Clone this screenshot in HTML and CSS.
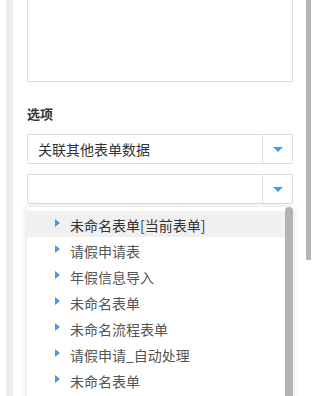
FILE: index.html
```html
<!DOCTYPE html>
<html lang="zh-CN">
<head>
  <meta charset="UTF-8">
  <meta name="viewport" content="width=device-width, initial-scale=1.0">
  <title>表单设置</title>
  <link rel="stylesheet" href="styles.css">
</head>
<body>

  <div class="page">
    <div class="side"></div>

    <main class="panel">
      <div class="textarea"></div>

      <div class="label">选项</div>

      <div class="select">
        <span class="select-text">关联其他表单数据</span>
        <span class="select-btn"><i class="arrow"></i></span>
      </div>

      <div class="select">
        <span class="select-text"></span>
        <span class="select-btn"><i class="arrow"></i></span>
      </div>

      <div class="dropdown">
        <ul class="list">
          <li class="item active"><i class="tri"></i>未命名表单[当前表单]</li>
          <li class="item"><i class="tri"></i>请假申请表</li>
          <li class="item"><i class="tri"></i>年假信息导入</li>
          <li class="item"><i class="tri"></i>未命名表单</li>
          <li class="item"><i class="tri"></i>未命名流程表单</li>
          <li class="item"><i class="tri"></i>请假申请_自动处理</li>
          <li class="item"><i class="tri"></i>未命名表单</li>
        </ul>
        <div class="list-scroll"></div>
      </div>
    </main>

    <div class="page-scroll"></div>
  </div>

</body>
</html>
```

FILE: styles.css
```css
body {
  margin: 0;
  background: #fff;
  font-family: "Noto Sans CJK SC", "Liberation Sans", sans-serif;
  font-size: 14px;
  color: #333;
  overflow: hidden;
}

.page {
  display: flex;
  height: 396px;
  overflow: hidden;
}

.side {
  width: 7px;
  margin-left: 6px;
  background: #ededed;
  flex-shrink: 0;
}

.panel {
  width: 266px;
  margin-left: 14px;
}

.textarea {
  height: 84px;
  margin-top: -2px;
  border: 1px solid #ddd;
  box-sizing: border-box;
  border-radius: 2px;
}

.label {
  margin-top: 24px;
  height: 16px;
  line-height: 16px;
  font-size: 13px;
  font-weight: bold;
  color: #333;
}

.select {
  display: flex;
  height: 30px;
  margin-top: 12px;
  border: 1px solid #ddd;
  box-sizing: border-box;
  border-radius: 2px;
  background: #fff;
}

.select + .select {
  margin-top: 10px;
}

.select-text {
  flex: 1;
  padding-left: 10px;
  line-height: 28px;
  color: #333;
}

.select-btn {
  width: 29px;
  border-left: 1px solid #ddd;
  display: flex;
  align-items: center;
  justify-content: center;
}

.arrow {
  width: 0;
  height: 0;
  border-left: 5px solid transparent;
  border-right: 5px solid transparent;
  border-top: 5px solid #3d9cf2;
  margin-top: 1px;
}

.dropdown {
  position: relative;
  margin-top: 3px;
  background: #fff;
  box-shadow: 0 0 7px rgba(0, 0, 0, 0.14);
  height: 200px;
}

.list {
  list-style: none;
  margin: 0;
  padding: 4px 0 0;
}

.item {
  display: flex;
  align-items: center;
  height: 26px;
  padding-left: 28px;
  padding-top: 2px;
  box-sizing: border-box;
  color: #555;
}

.item.active {
  background: #f0f0f0;
  color: #333;
}

.tri {
  width: 0;
  height: 0;
  border-top: 4px solid transparent;
  border-bottom: 4px solid transparent;
  border-left: 5px solid #3d9cf2;
  margin-right: 10px;
  margin-top: -5px;
}

.list-scroll {
  position: absolute;
  top: 0;
  right: 0;
  width: 8px;
  height: 100%;
  background: #b3b3b3;
  border-radius: 4px 4px 0 0;
}

.page-scroll {
  position: absolute;
  top: 0;
  right: 1px;
  width: 5px;
  height: 260px;
  background: #b3b3b3;
}
```
